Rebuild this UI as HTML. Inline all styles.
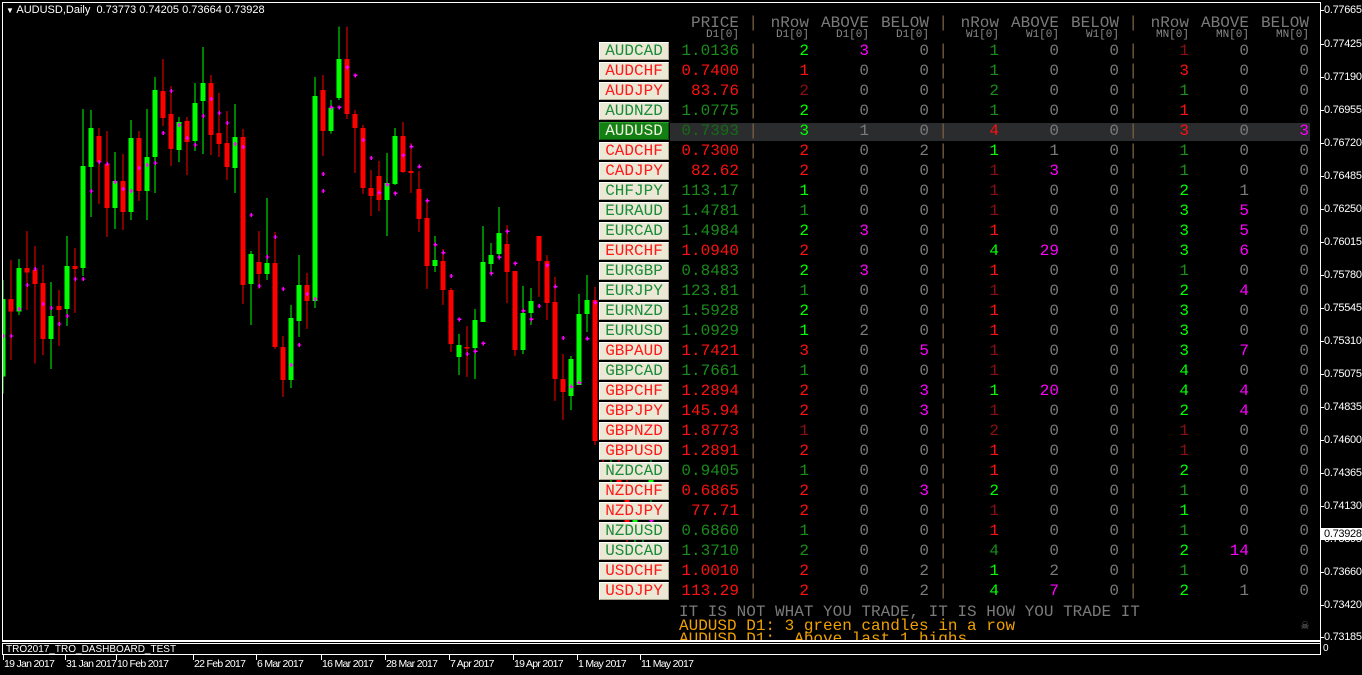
<!DOCTYPE html>
<html><head><meta charset="utf-8"><style>
*{margin:0;padding:0;box-sizing:border-box}
body{width:1362px;height:675px;background:#000;position:relative;overflow:hidden;font-family:"Liberation Mono",monospace}
.frame{position:absolute;left:2px;top:2px;width:1319px;height:639px;border:1px solid #fff;border-right:none}
.ax{position:absolute;left:1320px;top:2px;width:1px;height:653px;background:#fff}
.pl{position:absolute;left:1324px;font:11px "Liberation Sans",sans-serif;color:#fff;line-height:12px;letter-spacing:-0.3px}
.tk{position:absolute;left:1320px;width:4px;height:1px;background:#fff}
.dl{position:absolute;top:658px;font:10.5px "Liberation Sans",sans-serif;color:#fff;letter-spacing:-0.7px;line-height:12px}
.dt{position:absolute;top:655px;width:1px;height:5px;background:#fff}
.row{position:absolute;left:0;width:1362px;height:20px;font-size:16px;line-height:20px}
.row span{position:absolute;top:0;text-align:right;white-space:pre}
.lb{position:absolute;left:599px;width:70px;height:18px;top:1px;background:#ece8d6;border-top:1px solid #fff;border-left:1px solid #fff;border-right:1px solid #a8a490;border-bottom:1px solid #a8a490;font-size:16px;line-height:16px;text-align:center;letter-spacing:0px}
.c0{left:670px;width:69px}.b1{left:748px;width:10px;color:#7a6040}.c1{left:770px;width:39px}.c2{left:818px;width:51px}.c3{left:878px;width:51px}
.b2{left:938px;width:10px;color:#7a6040}.c4{left:960px;width:39px}.c5{left:1008px;width:51px}.c6{left:1068px;width:51px}
.b3{left:1128px;width:10px;color:#7a6040}.c7{left:1150px;width:39px}.c8{left:1198px;width:51px}.c9{left:1258px;width:51px}
.G{color:#00ff00}.g{color:#1a8c1a}.R{color:#ff1010}.r{color:#8b0f0f}.M{color:#ff00ff}.o{color:#7a7a7a}
.hd{position:absolute;color:#7a7a7a;font-size:16px;line-height:16px;text-align:right;white-space:pre}
.sd{position:absolute;color:#8a8a8a;font-size:11px;line-height:12px;text-align:right}
</style></head><body>
<div class="frame"></div>
<div style="position:absolute;left:2px;top:641px;width:1319px;height:2px;border-top:1px solid #fff"></div>
<div style="position:absolute;left:2px;top:643px;width:1319px;height:12px;border:1px solid #fff;border-right:none"></div>
<div style="position:absolute;left:6px;top:644px;font:10px 'Liberation Sans',sans-serif;color:#fff;line-height:11px">TRO2017_TRO_DASHBOARD_TEST</div>
<div style="position:absolute;left:1323px;top:643px;font:10px 'Liberation Sans',sans-serif;color:#fff">0</div>
<div class="ax"></div>
<div style="position:absolute;left:6px;top:4px;font:11px 'Liberation Sans',sans-serif;color:#fff;line-height:12px"><span style="font-size:8px">&#9660;</span> AUDUSD,Daily&nbsp; 0.73773 0.74205 0.73664 0.73928</div>

<svg style="position:absolute;left:0;top:0" width="1320" height="640" shape-rendering="crispEdges">
<defs><clipPath id="cp"><rect x="3" y="3" width="1316" height="637"/></clipPath></defs>
<g clip-path="url(#cp)">
<g transform="translate(0,40) scale(0.33333)">
<g fill="#00ff00">
<rect x="8" y="720" width="3" height="340"/><rect x="2" y="777" width="15" height="233"/>
<rect x="56" y="657" width="3" height="168"/><rect x="50" y="684" width="15" height="131"/>
<rect x="152" y="726" width="3" height="261"/><rect x="146" y="828" width="15" height="69"/>
<rect x="200" y="588" width="3" height="270"/><rect x="194" y="678" width="15" height="129"/>
<rect x="248" y="207" width="3" height="501"/><rect x="242" y="378" width="15" height="306"/>
<rect x="272" y="210" width="3" height="321"/><rect x="266" y="264" width="15" height="117"/>
<rect x="344" y="336" width="3" height="231"/><rect x="338" y="423" width="15" height="81"/>
<rect x="392" y="240" width="3" height="300"/><rect x="386" y="294" width="15" height="222"/>
<rect x="440" y="207" width="3" height="333"/><rect x="434" y="351" width="15" height="102"/>
<rect x="464" y="111" width="3" height="348"/><rect x="458" y="150" width="15" height="201"/>
<rect x="536" y="231" width="3" height="135"/><rect x="530" y="246" width="15" height="84"/>
<rect x="584" y="129" width="3" height="204"/><rect x="578" y="189" width="15" height="114"/>
<rect x="608" y="21" width="3" height="321"/><rect x="602" y="129" width="15" height="54"/>
<rect x="704" y="192" width="3" height="267"/><rect x="698" y="291" width="15" height="93"/>
<rect x="752" y="633" width="3" height="222"/><rect x="746" y="642" width="15" height="90"/>
<rect x="800" y="474" width="3" height="246"/><rect x="794" y="669" width="15" height="33"/>
<rect x="872" y="795" width="3" height="249"/><rect x="866" y="834" width="15" height="186"/>
<rect x="896" y="645" width="3" height="246"/><rect x="890" y="735" width="15" height="108"/>
<rect x="944" y="111" width="3" height="693"/><rect x="938" y="168" width="15" height="615"/>
<rect x="992" y="180" width="3" height="100"/><rect x="986" y="204" width="15" height="69"/>
</g>
<g fill="#ff0000">
<rect x="32" y="660" width="3" height="300"/><rect x="26" y="777" width="15" height="38"/>
<rect x="80" y="573" width="3" height="237"/><rect x="74" y="684" width="15" height="14"/>
<rect x="104" y="618" width="3" height="352"/><rect x="98" y="690" width="15" height="42"/>
<rect x="128" y="675" width="3" height="270"/><rect x="122" y="729" width="15" height="168"/>
<rect x="176" y="750" width="3" height="168"/><rect x="170" y="798" width="15" height="12"/>
<rect x="224" y="624" width="3" height="195"/><rect x="218" y="678" width="15" height="9"/>
<rect x="296" y="264" width="3" height="228"/><rect x="290" y="288" width="15" height="78"/>
<rect x="320" y="273" width="3" height="318"/><rect x="314" y="372" width="15" height="132"/>
<rect x="368" y="342" width="3" height="228"/><rect x="362" y="423" width="15" height="93"/>
<rect x="416" y="273" width="3" height="210"/><rect x="410" y="294" width="15" height="159"/>
<rect x="488" y="57" width="3" height="201"/><rect x="482" y="153" width="15" height="81"/>
<rect x="512" y="138" width="3" height="240"/><rect x="506" y="222" width="15" height="105"/>
<rect x="560" y="231" width="3" height="174"/><rect x="554" y="243" width="15" height="63"/>
<rect x="632" y="105" width="3" height="240"/><rect x="626" y="129" width="15" height="156"/>
<rect x="656" y="159" width="3" height="192"/><rect x="650" y="279" width="15" height="33"/>
<rect x="680" y="213" width="3" height="207"/><rect x="674" y="309" width="15" height="72"/>
<rect x="728" y="267" width="3" height="525"/><rect x="722" y="291" width="15" height="444"/>
<rect x="776" y="573" width="3" height="174"/><rect x="770" y="666" width="15" height="36"/>
<rect x="824" y="576" width="3" height="351"/><rect x="818" y="669" width="15" height="252"/>
<rect x="848" y="888" width="3" height="183"/><rect x="842" y="921" width="15" height="99"/>
<rect x="920" y="699" width="3" height="168"/><rect x="914" y="735" width="15" height="48"/>
<rect x="968" y="120" width="3" height="228"/><rect x="962" y="168" width="15" height="105"/>
</g>
<g fill="#ff00ff">
<path d="M4 886h12v4H4zM8 882h4v12H8z M28 886h12v4H28zM32 882h4v12h-4z M52 805h12v4H52zM56 801h4v12h-4z M76 733h12v4H76zM80 729h4v12h-4z M100 685h12v4h-12zM104 681h4v12h-4z M124 790h12v4h-12zM128 786h4v12h-4z M148 802h12v4h-12zM152 798h4v12h-4z M172 850h12v4h-12zM176 846h4v12h-4z M196 826h12v4h-12zM200 822h4v12h-4z M220 715h12v4h-12zM224 711h4v12h-4z M244 715h12v4h-12zM248 711h4v12h-4z M268 451h12v4h-12zM272 447h4v12h-4z M292 364h12v4h-12zM296 360h4v12h-4z M316 370h12v4h-12zM320 366h4v12h-4z M340 424h12v4h-12zM344 420h4v12h-4z M364 445h12v4h-12zM368 441h4v12h-4z M388 451h12v4h-12zM392 447h4v12h-4z M412 382h12v4h-12zM416 378h4v12h-4z M436 373h12v4h-12zM440 369h4v12h-4z M460 367h12v4h-12zM464 363h4v12h-4z M484 277h12v4h-12zM488 273h4v12h-4z M508 151h12v4h-12zM512 147h4v12h-4z M532 253h12v4h-12zM536 249h4v12h-4z M556 292h12v4h-12zM560 288h4v12h-4z M580 313h12v4h-12zM584 309h4v12h-4z M604 226h12v4h-12zM608 222h4v12h-4z M628 175h12v4h-12zM632 171h4v12h-4z M652 217h12v4h-12zM656 213h4v12h-4z M676 247h12v4h-12zM680 243h4v12h-4z M700 310h12v4h-12zM704 306h4v12h-4z M724 319h12v4h-12zM728 315h4v12h-4z M748 523h12v4h-12zM752 519h4v12h-4z M772 736h12v4h-12zM776 732h4v12h-4z M796 649h12v4h-12zM800 645h4v12h-4z M820 589h12v4h-12zM824 585h4v12h-4z M844 745h12v4h-12zM848 741h4v12h-4z M868 973h12v4h-12zM872 969h4v12h-4z M892 913h12v4h-12zM896 909h4v12h-4z M916 760h12v4h-12zM920 756h4v12h-4z M940 775h12v4h-12zM944 771h4v12h-4z M964 451h12v4h-12zM968 447h4v12h-4z"/>
</g>
</g>
<g transform="translate(320,40) scale(0.33333)">
<g fill="#00ff00">
<rect x="56" y="-40" width="3" height="220"/><rect x="50" y="57" width="15" height="117"/>
<rect x="200" y="339" width="3" height="249"/><rect x="194" y="429" width="15" height="51"/>
<rect x="224" y="264" width="3" height="171"/><rect x="218" y="288" width="15" height="144"/>
<rect x="344" y="588" width="3" height="108"/><rect x="338" y="660" width="15" height="18"/>
<rect x="416" y="882" width="3" height="123"/><rect x="410" y="915" width="15" height="36"/>
<rect x="464" y="807" width="3" height="210"/><rect x="458" y="840" width="15" height="84"/>
<rect x="488" y="558" width="3" height="288"/><rect x="482" y="666" width="15" height="180"/>
<rect x="512" y="609" width="3" height="87"/><rect x="506" y="645" width="15" height="27"/>
<rect x="536" y="501" width="3" height="153"/><rect x="530" y="579" width="15" height="63"/>
<rect x="608" y="738" width="3" height="204"/><rect x="602" y="819" width="15" height="111"/>
<rect x="632" y="744" width="3" height="111"/><rect x="626" y="783" width="15" height="36"/>
<rect x="752" y="948" width="3" height="162"/><rect x="746" y="957" width="15" height="111"/>
<rect x="776" y="762" width="3" height="273"/><rect x="770" y="822" width="15" height="213"/>
<rect x="800" y="705" width="3" height="171"/><rect x="794" y="780" width="15" height="42"/>
<rect x="872" y="1210" width="3" height="130"/><rect x="866" y="1218" width="15" height="14"/>
<rect x="944" y="1420" width="3" height="120"/><rect x="938" y="1430" width="15" height="70"/>
<rect x="968" y="1480" width="3" height="60"/>
<rect x="992" y="1210" width="3" height="200"/><rect x="986" y="1320" width="15" height="14"/>
</g>
<g fill="#ff0000">
<rect x="8" y="105" width="3" height="201"/><rect x="2" y="150" width="15" height="90"/>
<rect x="80" y="-40" width="3" height="277"/><rect x="74" y="57" width="15" height="165"/>
<rect x="104" y="210" width="3" height="189"/><rect x="98" y="222" width="15" height="42"/>
<rect x="128" y="255" width="3" height="207"/><rect x="122" y="264" width="15" height="180"/>
<rect x="152" y="390" width="3" height="138"/><rect x="146" y="444" width="15" height="24"/>
<rect x="176" y="363" width="3" height="150"/><rect x="170" y="408" width="15" height="72"/>
<rect x="248" y="246" width="3" height="153"/><rect x="242" y="288" width="15" height="108"/>
<rect x="272" y="309" width="3" height="150"/><rect x="266" y="393" width="15" height="6"/>
<rect x="296" y="393" width="3" height="183"/><rect x="290" y="447" width="15" height="90"/>
<rect x="320" y="480" width="3" height="267"/><rect x="314" y="534" width="15" height="144"/>
<rect x="368" y="627" width="3" height="168"/><rect x="362" y="663" width="15" height="87"/>
<rect x="392" y="744" width="3" height="192"/><rect x="386" y="750" width="15" height="162"/>
<rect x="440" y="858" width="3" height="153"/><rect x="434" y="921" width="15" height="4"/>
<rect x="560" y="555" width="3" height="234"/><rect x="554" y="612" width="15" height="84"/>
<rect x="584" y="693" width="3" height="255"/><rect x="578" y="693" width="15" height="237"/>
<rect x="656" y="588" width="3" height="183"/><rect x="650" y="588" width="15" height="75"/>
<rect x="680" y="645" width="3" height="195"/><rect x="674" y="663" width="15" height="126"/>
<rect x="704" y="711" width="3" height="372"/><rect x="698" y="786" width="15" height="231"/>
<rect x="728" y="942" width="3" height="198"/><rect x="722" y="1017" width="15" height="39"/>
<rect x="824" y="741" width="3" height="474"/><rect x="818" y="780" width="15" height="423"/>
<rect x="848" y="1210" width="3" height="80"/><rect x="842" y="1218" width="15" height="14"/>
<rect x="896" y="1210" width="3" height="120"/><rect x="890" y="1270" width="15" height="60"/>
<rect x="920" y="1320" width="3" height="235"/><rect x="914" y="1370" width="15" height="130"/>
</g>
<g fill="#ff00ff">
<path d="M4 400h12v4H4zM8 396h4v12H8z M28 200h12v4H28zM32 196h4v12h-4z M52 200h12v4H52zM56 196h4v12h-4z M76 80h12v4H76zM80 76h4v12h-4z M100 104h12v4h-12zM104 100h4v12h-4z M124 298h12v4h-12zM128 294h4v12h-4z M148 352h12v4h-12zM152 348h4v12h-4z M172 456h12v4h-12zM176 452h4v12h-4z M196 432h12v4h-12zM200 428h4v12h-4z M220 458h12v4h-12zM224 454h4v12h-4z M244 344h12v4h-12zM248 340h4v12h-4z M268 318h12v4h-12zM272 314h4v12h-4z M292 378h12v4h-12zM296 374h4v12h-4z M316 480h12v4h-12zM320 476h4v12h-4z M340 612h12v4h-12zM344 608h4v12h-4z M364 636h12v4h-12zM368 632h4v12h-4z M388 706h12v4h-12zM392 702h4v12h-4z M412 836h12v4h-12zM416 832h4v12h-4z M436 940h12v4h-12zM440 936h4v12h-4z M460 932h12v4h-12zM464 928h4v12h-4z M484 908h12v4h-12zM488 904h4v12h-4z M508 698h12v4h-12zM512 694h4v12h-4z M532 650h12v4h-12zM536 646h4v12h-4z M556 572h12v4h-12zM560 568h4v12h-4z M580 668h12v4h-12zM584 664h4v12h-4z M604 810h12v4h-12zM608 806h4v12h-4z M628 836h12v4h-12zM632 832h4v12h-4z M652 796h12v4h-12zM656 792h4v12h-4z M676 674h12v4h-12zM680 670h4v12h-4z M700 738h12v4h-12zM704 734h4v12h-4z M724 892h12v4h-12zM728 888h4v12h-4z M748 1038h12v4h-12zM752 1034h4v12h-4z M772 1026h12v4h-12zM776 1022h4v12h-4z M796 894h12v4h-12zM800 890h4v12h-4z M820 786h12v4h-12zM824 782h4v12h-4z M916 1276h12v4h-12zM920 1272h4v12h-4z M988 1440h12v4h-12zM992 1436h4v12h-4z"/>
</g>
</g>
</g>
</svg>

<div style="position:absolute;left:670px;top:123px;width:640px;height:18px;background:#2a2c2e"></div>

<div class="hd" style="left:670px;top:15px;width:69px">PRICE</div>
<div class="hd" style="left:748px;top:15px;width:10px;color:#7a6040">|</div>
<div class="hd" style="left:760px;top:15px;width:49px">nRow</div>
<div class="hd" style="left:810px;top:15px;width:59px">ABOVE</div>
<div class="hd" style="left:870px;top:15px;width:59px">BELOW</div>
<div class="hd" style="left:938px;top:15px;width:10px;color:#7a6040">|</div>
<div class="hd" style="left:950px;top:15px;width:49px">nRow</div>
<div class="hd" style="left:1000px;top:15px;width:59px">ABOVE</div>
<div class="hd" style="left:1060px;top:15px;width:59px">BELOW</div>
<div class="hd" style="left:1128px;top:15px;width:10px;color:#7a6040">|</div>
<div class="hd" style="left:1140px;top:15px;width:49px">nRow</div>
<div class="hd" style="left:1190px;top:15px;width:59px">ABOVE</div>
<div class="hd" style="left:1250px;top:15px;width:59px">BELOW</div>
<div class="sd" style="left:680px;top:29px;width:59px">D1[0]</div>
<div class="sd" style="left:750px;top:29px;width:59px">D1[0]</div>
<div class="sd" style="left:810px;top:29px;width:59px">D1[0]</div>
<div class="sd" style="left:870px;top:29px;width:59px">D1[0]</div>
<div class="sd" style="left:940px;top:29px;width:59px">W1[0]</div>
<div class="sd" style="left:1000px;top:29px;width:59px">W1[0]</div>
<div class="sd" style="left:1060px;top:29px;width:59px">W1[0]</div>
<div class="sd" style="left:1130px;top:29px;width:59px">MN[0]</div>
<div class="sd" style="left:1190px;top:29px;width:59px">MN[0]</div>
<div class="sd" style="left:1250px;top:29px;width:59px">MN[0]</div>

<div class="row" style="top:41px"><div class="lb" style="color:#1a8c3a">AUDCAD</div><span class="c0 g">1.0136</span><span class="b1">|</span><span class="c1 G">2</span><span class="c2 M">3</span><span class="c3 o">0</span><span class="b2">|</span><span class="c4 g">1</span><span class="c5 o">0</span><span class="c6 o">0</span><span class="b3">|</span><span class="c7 r">1</span><span class="c8 o">0</span><span class="c9 o">0</span></div>
<div class="row" style="top:61px"><div class="lb" style="color:#ff1a1a">AUDCHF</div><span class="c0 R">0.7400</span><span class="b1">|</span><span class="c1 R">1</span><span class="c2 o">0</span><span class="c3 o">0</span><span class="b2">|</span><span class="c4 g">1</span><span class="c5 o">0</span><span class="c6 o">0</span><span class="b3">|</span><span class="c7 R">3</span><span class="c8 o">0</span><span class="c9 o">0</span></div>
<div class="row" style="top:81px"><div class="lb" style="color:#ff1a1a">AUDJPY</div><span class="c0 R">83.76</span><span class="b1">|</span><span class="c1 r">2</span><span class="c2 o">0</span><span class="c3 o">0</span><span class="b2">|</span><span class="c4 g">2</span><span class="c5 o">0</span><span class="c6 o">0</span><span class="b3">|</span><span class="c7 g">1</span><span class="c8 o">0</span><span class="c9 o">0</span></div>
<div class="row" style="top:101px"><div class="lb" style="color:#1a8c3a">AUDNZD</div><span class="c0 g">1.0775</span><span class="b1">|</span><span class="c1 G">2</span><span class="c2 o">0</span><span class="c3 o">0</span><span class="b2">|</span><span class="c4 g">1</span><span class="c5 o">0</span><span class="c6 o">0</span><span class="b3">|</span><span class="c7 R">1</span><span class="c8 o">0</span><span class="c9 o">0</span></div>
<div class="row" style="top:121px"><div class="lb" style="color:#f0f0e0;background:#128012;border-color:#30a030 #0a500a #0a500a #30a030">AUDUSD</div><span class="c0" style="color:#156c15">0.7393</span><span class="b1">|</span><span class="c1 G">3</span><span class="c2 o">1</span><span class="c3 o">0</span><span class="b2">|</span><span class="c4 R">4</span><span class="c5 o">0</span><span class="c6 o">0</span><span class="b3">|</span><span class="c7 R">3</span><span class="c8 o">0</span><span class="c9 M">3</span></div>
<div class="row" style="top:141px"><div class="lb" style="color:#ff1a1a">CADCHF</div><span class="c0 R">0.7300</span><span class="b1">|</span><span class="c1 R">2</span><span class="c2 o">0</span><span class="c3 o">2</span><span class="b2">|</span><span class="c4 G">1</span><span class="c5 o">1</span><span class="c6 o">0</span><span class="b3">|</span><span class="c7 g">1</span><span class="c8 o">0</span><span class="c9 o">0</span></div>
<div class="row" style="top:161px"><div class="lb" style="color:#ff1a1a">CADJPY</div><span class="c0 R">82.62</span><span class="b1">|</span><span class="c1 R">2</span><span class="c2 o">0</span><span class="c3 o">0</span><span class="b2">|</span><span class="c4 r">1</span><span class="c5 M">3</span><span class="c6 o">0</span><span class="b3">|</span><span class="c7 g">1</span><span class="c8 o">0</span><span class="c9 o">0</span></div>
<div class="row" style="top:181px"><div class="lb" style="color:#1a8c3a">CHFJPY</div><span class="c0 g">113.17</span><span class="b1">|</span><span class="c1 G">1</span><span class="c2 o">0</span><span class="c3 o">0</span><span class="b2">|</span><span class="c4 r">1</span><span class="c5 o">0</span><span class="c6 o">0</span><span class="b3">|</span><span class="c7 G">2</span><span class="c8 o">1</span><span class="c9 o">0</span></div>
<div class="row" style="top:201px"><div class="lb" style="color:#1a8c3a">EURAUD</div><span class="c0 g">1.4781</span><span class="b1">|</span><span class="c1 g">1</span><span class="c2 o">0</span><span class="c3 o">0</span><span class="b2">|</span><span class="c4 r">1</span><span class="c5 o">0</span><span class="c6 o">0</span><span class="b3">|</span><span class="c7 G">3</span><span class="c8 M">5</span><span class="c9 o">0</span></div>
<div class="row" style="top:221px"><div class="lb" style="color:#1a8c3a">EURCAD</div><span class="c0 g">1.4984</span><span class="b1">|</span><span class="c1 G">2</span><span class="c2 M">3</span><span class="c3 o">0</span><span class="b2">|</span><span class="c4 R">1</span><span class="c5 o">0</span><span class="c6 o">0</span><span class="b3">|</span><span class="c7 G">3</span><span class="c8 M">5</span><span class="c9 o">0</span></div>
<div class="row" style="top:241px"><div class="lb" style="color:#ff1a1a">EURCHF</div><span class="c0 R">1.0940</span><span class="b1">|</span><span class="c1 R">2</span><span class="c2 o">0</span><span class="c3 o">0</span><span class="b2">|</span><span class="c4 G">4</span><span class="c5 M">29</span><span class="c6 o">0</span><span class="b3">|</span><span class="c7 G">3</span><span class="c8 M">6</span><span class="c9 o">0</span></div>
<div class="row" style="top:261px"><div class="lb" style="color:#1a8c3a">EURGBP</div><span class="c0 g">0.8483</span><span class="b1">|</span><span class="c1 G">2</span><span class="c2 M">3</span><span class="c3 o">0</span><span class="b2">|</span><span class="c4 R">1</span><span class="c5 o">0</span><span class="c6 o">0</span><span class="b3">|</span><span class="c7 g">1</span><span class="c8 o">0</span><span class="c9 o">0</span></div>
<div class="row" style="top:281px"><div class="lb" style="color:#1a8c3a">EURJPY</div><span class="c0 g">123.81</span><span class="b1">|</span><span class="c1 g">1</span><span class="c2 o">0</span><span class="c3 o">0</span><span class="b2">|</span><span class="c4 r">1</span><span class="c5 o">0</span><span class="c6 o">0</span><span class="b3">|</span><span class="c7 G">2</span><span class="c8 M">4</span><span class="c9 o">0</span></div>
<div class="row" style="top:301px"><div class="lb" style="color:#1a8c3a">EURNZD</div><span class="c0 g">1.5928</span><span class="b1">|</span><span class="c1 G">2</span><span class="c2 o">0</span><span class="c3 o">0</span><span class="b2">|</span><span class="c4 R">1</span><span class="c5 o">0</span><span class="c6 o">0</span><span class="b3">|</span><span class="c7 G">3</span><span class="c8 o">0</span><span class="c9 o">0</span></div>
<div class="row" style="top:321px"><div class="lb" style="color:#1a8c3a">EURUSD</div><span class="c0 g">1.0929</span><span class="b1">|</span><span class="c1 G">1</span><span class="c2 o">2</span><span class="c3 o">0</span><span class="b2">|</span><span class="c4 R">1</span><span class="c5 o">0</span><span class="c6 o">0</span><span class="b3">|</span><span class="c7 G">3</span><span class="c8 o">0</span><span class="c9 o">0</span></div>
<div class="row" style="top:341px"><div class="lb" style="color:#ff1a1a">GBPAUD</div><span class="c0 R">1.7421</span><span class="b1">|</span><span class="c1 R">3</span><span class="c2 o">0</span><span class="c3 M">5</span><span class="b2">|</span><span class="c4 r">1</span><span class="c5 o">0</span><span class="c6 o">0</span><span class="b3">|</span><span class="c7 G">3</span><span class="c8 M">7</span><span class="c9 o">0</span></div>
<div class="row" style="top:361px"><div class="lb" style="color:#1a8c3a">GBPCAD</div><span class="c0 g">1.7661</span><span class="b1">|</span><span class="c1 g">1</span><span class="c2 o">0</span><span class="c3 o">0</span><span class="b2">|</span><span class="c4 r">1</span><span class="c5 o">0</span><span class="c6 o">0</span><span class="b3">|</span><span class="c7 G">4</span><span class="c8 o">0</span><span class="c9 o">0</span></div>
<div class="row" style="top:381px"><div class="lb" style="color:#ff1a1a">GBPCHF</div><span class="c0 R">1.2894</span><span class="b1">|</span><span class="c1 R">2</span><span class="c2 o">0</span><span class="c3 M">3</span><span class="b2">|</span><span class="c4 G">1</span><span class="c5 M">20</span><span class="c6 o">0</span><span class="b3">|</span><span class="c7 G">4</span><span class="c8 M">4</span><span class="c9 o">0</span></div>
<div class="row" style="top:401px"><div class="lb" style="color:#ff1a1a">GBPJPY</div><span class="c0 R">145.94</span><span class="b1">|</span><span class="c1 R">2</span><span class="c2 o">0</span><span class="c3 M">3</span><span class="b2">|</span><span class="c4 r">1</span><span class="c5 o">0</span><span class="c6 o">0</span><span class="b3">|</span><span class="c7 G">2</span><span class="c8 M">4</span><span class="c9 o">0</span></div>
<div class="row" style="top:421px"><div class="lb" style="color:#ff1a1a">GBPNZD</div><span class="c0 R">1.8773</span><span class="b1">|</span><span class="c1 r">1</span><span class="c2 o">0</span><span class="c3 o">0</span><span class="b2">|</span><span class="c4 r">2</span><span class="c5 o">0</span><span class="c6 o">0</span><span class="b3">|</span><span class="c7 r">1</span><span class="c8 o">0</span><span class="c9 o">0</span></div>
<div class="row" style="top:441px"><div class="lb" style="color:#ff1a1a">GBPUSD</div><span class="c0 R">1.2891</span><span class="b1">|</span><span class="c1 R">2</span><span class="c2 o">0</span><span class="c3 o">0</span><span class="b2">|</span><span class="c4 R">1</span><span class="c5 o">0</span><span class="c6 o">0</span><span class="b3">|</span><span class="c7 r">1</span><span class="c8 o">0</span><span class="c9 o">0</span></div>
<div class="row" style="top:461px"><div class="lb" style="color:#1a8c3a">NZDCAD</div><span class="c0 g">0.9405</span><span class="b1">|</span><span class="c1 g">1</span><span class="c2 o">0</span><span class="c3 o">0</span><span class="b2">|</span><span class="c4 R">1</span><span class="c5 o">0</span><span class="c6 o">0</span><span class="b3">|</span><span class="c7 G">2</span><span class="c8 o">0</span><span class="c9 o">0</span></div>
<div class="row" style="top:481px"><div class="lb" style="color:#ff1a1a">NZDCHF</div><span class="c0 R">0.6865</span><span class="b1">|</span><span class="c1 R">2</span><span class="c2 o">0</span><span class="c3 M">3</span><span class="b2">|</span><span class="c4 G">2</span><span class="c5 o">0</span><span class="c6 o">0</span><span class="b3">|</span><span class="c7 g">1</span><span class="c8 o">0</span><span class="c9 o">0</span></div>
<div class="row" style="top:501px"><div class="lb" style="color:#ff1a1a">NZDJPY</div><span class="c0 R">77.71</span><span class="b1">|</span><span class="c1 R">2</span><span class="c2 o">0</span><span class="c3 o">0</span><span class="b2">|</span><span class="c4 r">1</span><span class="c5 o">0</span><span class="c6 o">0</span><span class="b3">|</span><span class="c7 G">1</span><span class="c8 o">0</span><span class="c9 o">0</span></div>
<div class="row" style="top:521px"><div class="lb" style="color:#1a8c3a">NZDUSD</div><span class="c0 g">0.6860</span><span class="b1">|</span><span class="c1 g">1</span><span class="c2 o">0</span><span class="c3 o">0</span><span class="b2">|</span><span class="c4 R">1</span><span class="c5 o">0</span><span class="c6 o">0</span><span class="b3">|</span><span class="c7 g">1</span><span class="c8 o">0</span><span class="c9 o">0</span></div>
<div class="row" style="top:541px"><div class="lb" style="color:#1a8c3a">USDCAD</div><span class="c0 g">1.3710</span><span class="b1">|</span><span class="c1 g">2</span><span class="c2 o">0</span><span class="c3 o">0</span><span class="b2">|</span><span class="c4 g">4</span><span class="c5 o">0</span><span class="c6 o">0</span><span class="b3">|</span><span class="c7 G">2</span><span class="c8 M">14</span><span class="c9 o">0</span></div>
<div class="row" style="top:561px"><div class="lb" style="color:#ff1a1a">USDCHF</div><span class="c0 R">1.0010</span><span class="b1">|</span><span class="c1 R">2</span><span class="c2 o">0</span><span class="c3 o">2</span><span class="b2">|</span><span class="c4 G">1</span><span class="c5 o">2</span><span class="c6 o">0</span><span class="b3">|</span><span class="c7 g">1</span><span class="c8 o">0</span><span class="c9 o">0</span></div>
<div class="row" style="top:581px"><div class="lb" style="color:#ff1a1a">USDJPY</div><span class="c0 R">113.29</span><span class="b1">|</span><span class="c1 R">2</span><span class="c2 o">0</span><span class="c3 o">2</span><span class="b2">|</span><span class="c4 G">4</span><span class="c5 M">7</span><span class="c6 o">0</span><span class="b3">|</span><span class="c7 G">2</span><span class="c8 o">1</span><span class="c9 o">0</span></div>

<div style="position:absolute;left:679px;top:604px;font-size:16px;line-height:16px;color:#7a7a7a;white-space:pre">IT IS NOT WHAT YOU TRADE, IT IS HOW YOU TRADE IT</div>
<div style="position:absolute;left:679px;top:618px;font-size:16px;line-height:16px;color:#f0a000;white-space:pre">AUDUSD D1: 3 green candles in a row</div>
<div style="position:absolute;left:679px;top:631px;width:640px;height:9px;overflow:hidden"><div style="font-size:16px;line-height:16px;color:#f0a000;white-space:pre">AUDUSD D1:  Above last 1 highs</div></div>
<div style="position:absolute;left:1301px;top:619px;font-size:13px;color:#7a7a7a;line-height:14px">&#9760;</div>

<div class="tk" style="top:10px"></div><div class="pl" style="top:4px">0.77665</div>
<div class="tk" style="top:44px"></div><div class="pl" style="top:38px">0.77425</div>
<div class="tk" style="top:77px"></div><div class="pl" style="top:71px">0.77190</div>
<div class="tk" style="top:110px"></div><div class="pl" style="top:104px">0.76955</div>
<div class="tk" style="top:143px"></div><div class="pl" style="top:137px">0.76720</div>
<div class="tk" style="top:176px"></div><div class="pl" style="top:170px">0.76485</div>
<div class="tk" style="top:209px"></div><div class="pl" style="top:203px">0.76250</div>
<div class="tk" style="top:242px"></div><div class="pl" style="top:236px">0.76015</div>
<div class="tk" style="top:275px"></div><div class="pl" style="top:269px">0.75780</div>
<div class="tk" style="top:308px"></div><div class="pl" style="top:302px">0.75545</div>
<div class="tk" style="top:341px"></div><div class="pl" style="top:335px">0.75310</div>
<div class="tk" style="top:374px"></div><div class="pl" style="top:368px">0.75075</div>
<div class="tk" style="top:407px"></div><div class="pl" style="top:401px">0.74835</div>
<div class="tk" style="top:440px"></div><div class="pl" style="top:434px">0.74600</div>
<div class="tk" style="top:473px"></div><div class="pl" style="top:467px">0.74365</div>
<div class="tk" style="top:506px"></div><div class="pl" style="top:500px">0.74130</div>
<div class="tk" style="top:539px"></div><div class="pl" style="top:533px">0.73895</div>
<div class="tk" style="top:572px"></div><div class="pl" style="top:566px">0.73660</div>
<div class="tk" style="top:605px"></div><div class="pl" style="top:599px">0.73420</div>
<div class="tk" style="top:637px"></div><div class="pl" style="top:631px">0.73185</div>
<div style="position:absolute;left:1321px;top:528px;width:41px;height:12px;background:#fff;color:#000;font:11px 'Liberation Sans',sans-serif;line-height:12px;padding-left:3px;letter-spacing:-0.3px">0.73928</div>

<div class="dt" style="left:3px"></div><div class="dl" style="left:4px">19 Jan 2017</div>
<div class="dt" style="left:65px"></div><div class="dl" style="left:66px">31 Jan 2017</div>
<div class="dt" style="left:116px"></div><div class="dl" style="left:117px">10 Feb 2017</div>
<div class="dt" style="left:193px"></div><div class="dl" style="left:194px">22 Feb 2017</div>
<div class="dt" style="left:256px"></div><div class="dl" style="left:257px">6 Mar 2017</div>
<div class="dt" style="left:321px"></div><div class="dl" style="left:322px">16 Mar 2017</div>
<div class="dt" style="left:385px"></div><div class="dl" style="left:386px">28 Mar 2017</div>
<div class="dt" style="left:449px"></div><div class="dl" style="left:450px">7 Apr 2017</div>
<div class="dt" style="left:513px"></div><div class="dl" style="left:514px">19 Apr 2017</div>
<div class="dt" style="left:577px"></div><div class="dl" style="left:578px">1 May 2017</div>
<div class="dt" style="left:640px"></div><div class="dl" style="left:641px">11 May 2017</div>
</body></html>
